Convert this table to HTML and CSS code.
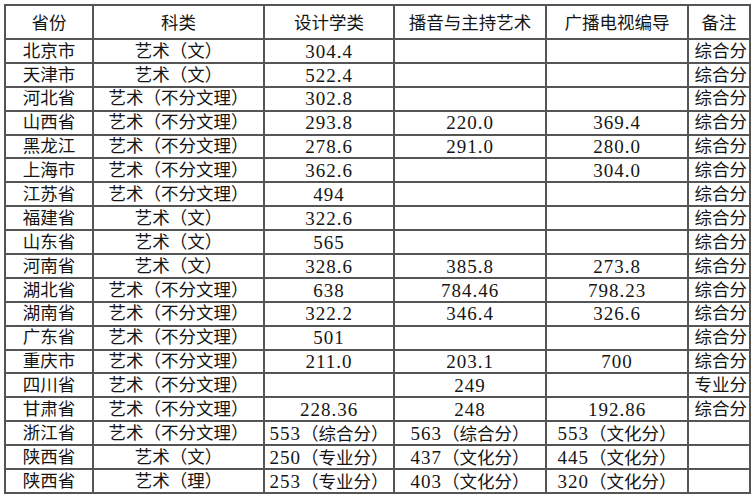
FILE: index.html
```html
<!DOCTYPE html>
<html lang="zh-CN">
<head>
<meta charset="utf-8">
<title>艺术类录取分数线</title>
<link rel="stylesheet" href="styles.css">
</head>
<body>
<table class="grid">
  <colgroup>
    <col class="c-prov"><col class="c-type"><col class="c-design"><col class="c-broad"><col class="c-tv"><col class="c-note">
  </colgroup>
  <thead>
    <tr class="head">
      <th>省份</th><th>科类</th><th>设计学类</th><th>播音与主持艺术</th><th>广播电视编导</th><th>备注</th>
    </tr>
  </thead>
  <tbody>
    <tr><td>北京市</td><td>艺术（文）</td><td><span class="num">304.4</span></td><td></td><td></td><td class="note">综合分</td></tr>
    <tr><td>天津市</td><td>艺术（文）</td><td><span class="num">522.4</span></td><td></td><td></td><td class="note">综合分</td></tr>
    <tr><td>河北省</td><td>艺术（不分文理）</td><td><span class="num">302.8</span></td><td></td><td></td><td class="note">综合分</td></tr>
    <tr><td>山西省</td><td>艺术（不分文理）</td><td><span class="num">293.8</span></td><td><span class="num">220.0</span></td><td><span class="num">369.4</span></td><td class="note">综合分</td></tr>
    <tr><td>黑龙江</td><td>艺术（不分文理）</td><td><span class="num">278.6</span></td><td><span class="num">291.0</span></td><td><span class="num">280.0</span></td><td class="note">综合分</td></tr>
    <tr><td>上海市</td><td>艺术（不分文理）</td><td><span class="num">362.6</span></td><td></td><td><span class="num">304.0</span></td><td class="note">综合分</td></tr>
    <tr><td>江苏省</td><td>艺术（不分文理）</td><td><span class="num">494</span></td><td></td><td></td><td class="note">综合分</td></tr>
    <tr><td>福建省</td><td>艺术（文）</td><td><span class="num">322.6</span></td><td></td><td></td><td class="note">综合分</td></tr>
    <tr><td>山东省</td><td>艺术（文）</td><td><span class="num">565</span></td><td></td><td></td><td class="note">综合分</td></tr>
    <tr><td>河南省</td><td>艺术（文）</td><td><span class="num">328.6</span></td><td><span class="num">385.8</span></td><td><span class="num">273.8</span></td><td class="note">综合分</td></tr>
    <tr><td>湖北省</td><td>艺术（不分文理）</td><td><span class="num">638</span></td><td><span class="num">784.46</span></td><td><span class="num">798.23</span></td><td class="note">综合分</td></tr>
    <tr><td>湖南省</td><td>艺术（不分文理）</td><td><span class="num">322.2</span></td><td><span class="num">346.4</span></td><td><span class="num">326.6</span></td><td class="note">综合分</td></tr>
    <tr><td>广东省</td><td>艺术（不分文理）</td><td><span class="num">501</span></td><td></td><td></td><td class="note">综合分</td></tr>
    <tr><td>重庆市</td><td>艺术（不分文理）</td><td><span class="num">211.0</span></td><td><span class="num">203.1</span></td><td><span class="num">700</span></td><td class="note">综合分</td></tr>
    <tr><td>四川省</td><td>艺术（不分文理）</td><td></td><td><span class="num">249</span></td><td></td><td class="note">专业分</td></tr>
    <tr><td>甘肃省</td><td>艺术（不分文理）</td><td><span class="num">228.36</span></td><td><span class="num">248</span></td><td><span class="num">192.86</span></td><td class="note">综合分</td></tr>
    <tr><td>浙江省</td><td>艺术（不分文理）</td><td><span class="num">553</span>（综合分）</td><td><span class="num">563</span>（综合分）</td><td><span class="num">553</span>（文化分）</td><td class="note"></td></tr>
    <tr><td>陕西省</td><td>艺术（文）</td><td><span class="num">250</span>（专业分）</td><td><span class="num">437</span>（文化分）</td><td><span class="num">445</span>（文化分）</td><td class="note"></td></tr>
    <tr><td>陕西省</td><td>艺术（理）</td><td><span class="num">253</span>（专业分）</td><td><span class="num">403</span>（文化分）</td><td><span class="num">320</span>（文化分）</td><td class="note"></td></tr>
  </tbody>
</table>
</body>
</html>
```

FILE: styles.css
```css
html, body {
  margin: 0;
  padding: 0;
  background: #ffffff;
}

.grid {
  border-collapse: collapse;
  table-layout: fixed;
  width: 747px;
  margin: 4px 0 0 4px;
  font-family: "Liberation Serif", "Noto Sans CJK SC", serif;
  font-size: 17.5px;
  color: #151515;
}

.c-prov { width: 88px; }
.c-type { width: 171px; }
.c-design { width: 130px; }
.c-broad { width: 152px; }
.c-tv { width: 142px; }
.c-note { width: 62px; }

.grid th,
.grid td {
  border: 2px solid #555555;
  padding: 0;
  text-align: center;
  vertical-align: middle;
  white-space: nowrap;
  line-height: 1;
  font-weight: 400;
}

.grid .head {
  height: 34px;
}

.grid .head th {
  padding-top: 3px;
}

.grid tbody tr {
  height: 23.9px;
}

.grid td {
  padding-top: 1px;
}

.grid .note {
  text-align: right;
  padding-right: 2px;
}

.num {
  font-family: "Liberation Serif", serif;
  font-size: 19px;
  letter-spacing: 1px;
}
```
